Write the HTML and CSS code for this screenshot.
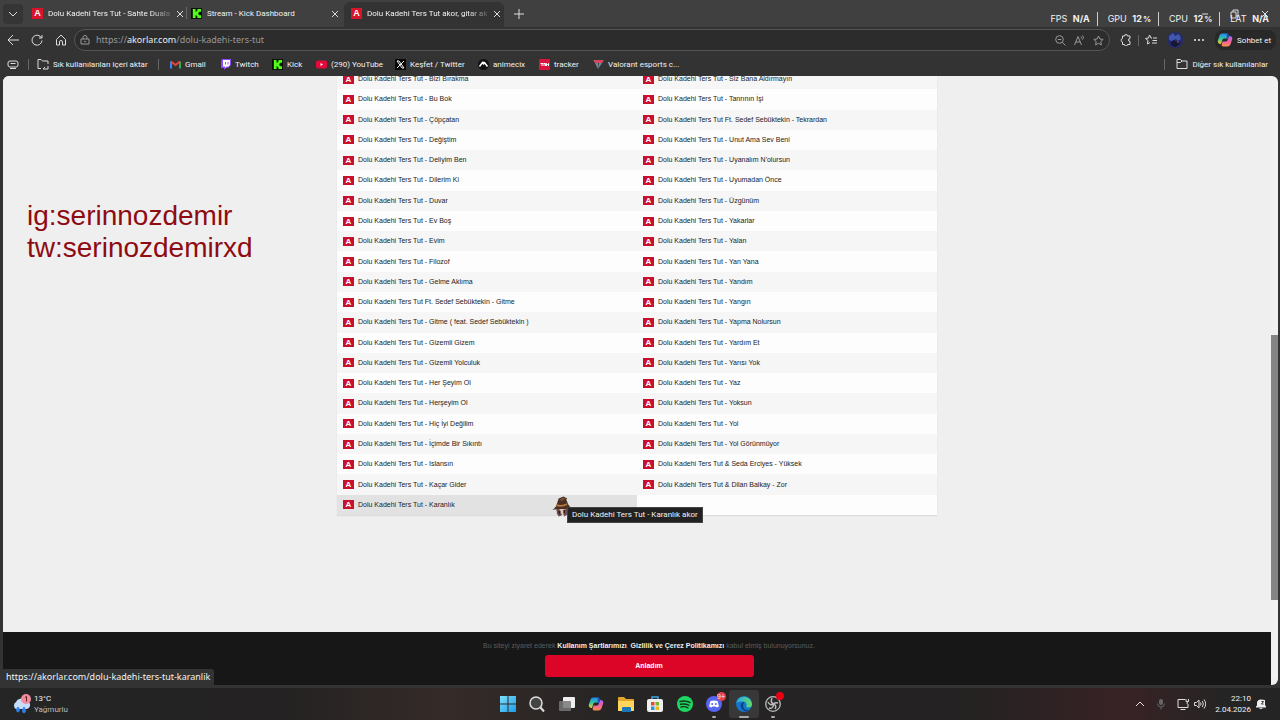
FILE: index.html
```html
<!DOCTYPE html>
<html lang="tr">
<head>
<meta charset="utf-8">
<title>Dolu Kadehi Ters Tut akor, gitar akorları</title>
<link rel="stylesheet" href="styles.css">
</head>
<body>
<svg class="defs" aria-hidden="true">
  <defs>
    <linearGradient id="blue" x1="0" y1="0" x2="1" y2="1"><stop offset="0" stop-color="#7fe0fa"/><stop offset="1" stop-color="#1c9be8"/></linearGradient>
    <linearGradient id="cpA" x1="0" y1="0" x2="0" y2="1"><stop offset="0" stop-color="#1f8df0"/><stop offset=".5" stop-color="#35c3a0"/><stop offset="1" stop-color="#f5d21c"/></linearGradient>
    <linearGradient id="cpB" x1="0" y1="0" x2="0" y2="1"><stop offset="0" stop-color="#a66bf5"/><stop offset=".5" stop-color="#ee5fa5"/><stop offset="1" stop-color="#fb8f4a"/></linearGradient>
    <linearGradient id="edgeA" x1="0" y1="0" x2="1" y2="0"><stop offset="0" stop-color="#2aa9e8"/><stop offset="1" stop-color="#62dc6a"/></linearGradient>
    <symbol id="copilot" viewBox="0 0 20 20">
      <path d="M7 2h5c2 0 2.500 1 2 3l-1 3H9c-1.500 0-2 1-2.500 2.500L5 15c-3 0-4.500-1.500-4-4l2-6c.8-2 2-3 4-3z" fill="url(#cpA)"/>
      <path d="M13 18H8c-2 0-2.500-1-2-3l1-3h4c1.500 0 2-1 2.500-2.500L15 5c3 0 4.500 1.500 4 4l-2 6c-.8 2-2 3-4 3z" fill="url(#cpB)"/>
      <path d="M12 2c1.700 0 2.300 1 2.800 3l-1.300 4-1.500-1z" fill="#2450c8"/>
    </symbol>
    <symbol id="close" viewBox="0 0 10 10"><path d="M2 2l6 6M8 2L2 8" stroke="#ddd" fill="none"/></symbol>
    <symbol id="kick" viewBox="0 0 12 12"><path d="M0 0h12v12H0z" fill="#071204"/><path d="M2 1h3v3h1V3h1V1h4v3H9v1H8v2h1v1h2v3H7V9H6V8H5v3H2z" fill="#53fc18"/></symbol>
  </defs>
</svg>

<div class="desktop">
  <div class="browser">
    <header class="tabs">
      <button class="tab-menu" aria-label="Sekmeler"><svg class="i10" viewBox="0 0 10 10"><path d="M1 3l4 4 4-4" class="line"/></svg></button>
      <div class="tab tab-first"><span class="a-icon">A</span><span class="tab-title fade">Dolu Kadehi Ters Tut - Sahte Duala</span><button aria-label="Kapat"><svg class="i10"><use href="#close"/></svg></button></div>
      <div class="tab tab-kick"><svg class="i11"><use href="#kick"/></svg><span class="tab-title">Stream - Kick Dashboard</span><button aria-label="Kapat"><svg class="i10"><use href="#close"/></svg></button></div>
      <div class="tab tab-active"><span class="a-icon">A</span><span class="tab-title fade">Dolu Kadehi Ters Tut akor, gitar ak</span><button aria-label="Kapat"><svg class="i10"><use href="#close"/></svg></button></div>
      <button class="new-tab" aria-label="Yeni sekme"><svg class="i10" viewBox="0 0 10 10"><path d="M5 0v10M0 5h10" class="line"/></svg></button>
      <div class="window-buttons">
        <button aria-label="Küçült"><svg class="i10" viewBox="0 0 10 10"><path d="M2 5h6" class="line"/></svg></button>
        <button aria-label="Geri yükle"><svg class="i10" viewBox="0 0 10 10"><path d="M1 3h5v6H1zM3 3V1h5v6H6" class="line"/></svg></button>
        <button aria-label="Kapat"><svg class="i10"><use href="#close"/></svg></button>
      </div>
      <div class="stats">
        <span>FPS <b>N/A</b></span><span>GPU <b>12<small>%</small></b></span><span>CPU <b>12<small>%</small></b></span><span>LAT <b>N/A</b></span>
      </div>
    </header>

    <nav class="toolbar">
      <button class="nav-button" aria-label="Geri"><svg class="i12" viewBox="0 0 12 12"><path d="M6 1L1 6l5 5M1 6h11" class="line"/></svg></button>
      <button class="nav-button" aria-label="Yenile"><svg class="i12" viewBox="0 0 12 12"><path d="M10.500 4A5 5 0 1 0 11 6.500M11 1v3H8" class="line"/></svg></button>
      <button aria-label="Ana sayfa"><svg class="i12" viewBox="0 0 12 12"><path d="M1.500 5.500L6 1l4.500 4.500V11H7.500V8a1.500 1.500 0 0 0-3 0v3h-3z" class="line"/></svg></button>
      <div class="address">
        <svg class="i10" viewBox="0 0 10 10"><path d="M1 4h8v5H1zM3 4V2.500a2 2 0 0 1 4 0V4" class="line dim"/><circle cx="5" cy="6.500" r=".8" fill="#aaa"/></svg>
        <a class="url" href="#liste">https://<b>akorlar.com</b>/dolu-kadehi-ters-tut</a>
        <svg class="i11" viewBox="0 0 11 11"><circle cx="4.500" cy="4.500" r="3.800" class="line dim"/><path d="M7.300 7.300L10.500 10.500M2.800 4.500h3.500" class="line dim"/></svg>
        <svg class="i11" viewBox="0 0 11 11"><path d="M.5 10L4 1.500 7.500 10M1.800 7h4.500M7 1.500q1 1 0 2M8.500.5q2 2 0 4" class="line dim"/></svg>
        <svg class="i11" viewBox="0 0 11 11"><path d="M5.500 1l1.400 3 3.300.4-2.400 2.200.6 3.300-2.900-1.600-2.900 1.600.6-3.300L.8 4.400 4.100 4z" class="line dim"/></svg>
      </div>
      <button aria-label="Uzantılar"><svg class="i12" viewBox="0 0 12 12"><path d="M2.500 2h2a1.500 1.500 0 0 1 3 0h2.500v2.500a1.300 1.300 0 0 0 0 3V10.500H7.500a1.500 1.500 0 0 1-3 0h-2V8a1.800 1.800 0 0 1 0-3.500z" class="line"/></svg></button>
      <span class="rule"></span>
      <button aria-label="Sık kullanılanlar"><svg class="i12" viewBox="0 0 12 12"><path d="M7 4H6L4.500 1 3.500 4l-3 .5L3 6.500 2.300 10 5 8.500M8 4h4M7.500 6.500H12M7 9h5" class="line"/></svg></button>
      <button aria-label="Profil"><svg class="i16" viewBox="0 0 16 16"><circle cx="8" cy="8" r="8" fill="#252b69"/><path d="M2 4l4-3 2 3 4-2 2 5-3 2-2-2-4 2-3-1z" fill="#4156ae"/><path d="M4 10l3-2 2 2 3-1 1 3-5 3-4-2z" fill="#151737"/><circle cx="11" cy="10" r="1" fill="#9a3760"/></svg></button>
      <button aria-label="Diğer"><svg class="i12" viewBox="0 0 12 12"><g fill="#eee"><circle cx="2" cy="6" r="1"/><circle cx="6" cy="6" r="1"/><circle cx="10" cy="6" r="1"/></g></svg></button>
      <button class="chat"><svg class="i16"><use href="#copilot"/></svg>Sohbet et</button>
    </nav>

    <nav class="bookmarks">
      <svg class="i12" viewBox="0 0 12 12"><rect x="1" y="3" width="10" height="6" rx="2" class="line"/><path d="M3.500 5.500h5M3 10.500h6" class="line"/></svg>
      <span class="rule"></span>
      <a href="#liste"><svg class="i12" viewBox="0 0 12 12"><path d="M4 10.500H1V1.500h3l1.500 1.500H11v3M11 8v3H6M8 9l-2 2" class="line"/></svg>Sık kullanılanları içeri aktar</a>
      <span class="rule"></span>
      <a href="#liste"><svg class="i11" viewBox="0 0 11 11"><path d="M1 9.500V2.500" stroke="#4285f4" stroke-width="2"/><path d="M10 9.500V2.500" stroke="#34a853" stroke-width="2"/><path d="M1 2.500l4.500 3.500L10 2.500" stroke="#ea4335" stroke-width="2" fill="none"/></svg>Gmail</a>
      <a href="#liste"><svg class="i11" viewBox="0 0 11 11"><path d="M2 0h9v6L8 9H6l-2 2V9H1V2z" fill="#9146ff"/><path d="M3 1h7v5L8.500 7.500h-2L5 9V7.500H3z" fill="#fff"/><path d="M5.500 3v2.500M8 3v2.500" stroke="#9146ff"/></svg>Twitch</a>
      <a href="#liste"><svg class="i11"><use href="#kick"/></svg>Kick</a>
      <a href="#liste"><svg class="i11" viewBox="0 0 11 11"><rect y="1.500" width="11" height="8" rx="2" fill="#e5093a"/><path d="M4.500 4v3L7 5.500z" fill="#fff"/></svg>(290) YouTube</a>
      <a href="#liste"><svg class="i11" viewBox="0 0 11 11"><path d="M0 0h11v11H0z" fill="#080808"/><path d="M2 2h2l5 7H7zM9 2L2 9" stroke="#eee" fill="none"/></svg>Keşfet / Twitter</a>
      <a href="#liste"><svg class="i11" viewBox="0 0 11 11"><circle cx="5.500" cy="5.500" r="5.500" fill="#111"/><path d="M1.500 7.500L4.500 3.500 6 5.500M5 3.500h1.500l3 4" stroke="#fff" stroke-width="1.500" fill="none"/></svg>animecix</a>
      <a href="#liste"><svg class="i11" viewBox="0 0 11 11"><rect width="11" height="11" rx="1" fill="#d9143f"/><path d="M1.500 4.500h3M3 4.500v2.500M5 7V4.500h1.500V7M7.500 7V4.500l1 1 1-1V7" stroke="#fff" fill="none"/></svg>tracker</a>
      <a href="#liste"><svg class="i11" viewBox="0 0 11 11"><path d="M0 1h11L9 4H2z" fill="#d6475b"/><path d="M2 4h3v6zM9 4H6L5 10z" fill="#708ba0"/></svg>Valorant esports c...</a>
      <span class="rule"></span>
      <a href="#liste"><svg class="i12" viewBox="0 0 12 12"><path d="M1 10.500V1.500h3.500L6 3h5v7.500zM1 4.500h3.500L6 3" class="line"/></svg>Diğer sık kullanılanlar</a>
    </nav>

    <div class="viewport">
      <div class="page">
        <main>
          <ul class="songs" id="liste">
            <li><a href="#"><i>A</i>Dolu Kadehi Ters Tut - Bizi Bırakma</a></li>
            <li><a href="#"><i>A</i>Dolu Kadehi Ters Tut - Bu Bok</a></li>
            <li><a href="#"><i>A</i>Dolu Kadehi Ters Tut - Çöpçatan</a></li>
            <li><a href="#"><i>A</i>Dolu Kadehi Ters Tut - Değiştim</a></li>
            <li><a href="#"><i>A</i>Dolu Kadehi Ters Tut - Deliyim Ben</a></li>
            <li><a href="#"><i>A</i>Dolu Kadehi Ters Tut - Dilerim Ki</a></li>
            <li><a href="#"><i>A</i>Dolu Kadehi Ters Tut - Duvar</a></li>
            <li><a href="#"><i>A</i>Dolu Kadehi Ters Tut - Ev Boş</a></li>
            <li><a href="#"><i>A</i>Dolu Kadehi Ters Tut - Evim</a></li>
            <li><a href="#"><i>A</i>Dolu Kadehi Ters Tut - Filozof</a></li>
            <li><a href="#"><i>A</i>Dolu Kadehi Ters Tut - Gelme Aklıma</a></li>
            <li><a href="#"><i>A</i>Dolu Kadehi Ters Tut Ft. Sedef Sebüktekin - Gitme</a></li>
            <li><a href="#"><i>A</i>Dolu Kadehi Ters Tut - Gitme ( feat. Sedef Sebüktekin )</a></li>
            <li><a href="#"><i>A</i>Dolu Kadehi Ters Tut - Gizemli Gizem</a></li>
            <li><a href="#"><i>A</i>Dolu Kadehi Ters Tut - Gizemli Yolculuk</a></li>
            <li><a href="#"><i>A</i>Dolu Kadehi Ters Tut - Her Şeyim Ol</a></li>
            <li><a href="#"><i>A</i>Dolu Kadehi Ters Tut - Herşeyim Ol</a></li>
            <li><a href="#"><i>A</i>Dolu Kadehi Ters Tut - Hiç İyi Değilim</a></li>
            <li><a href="#"><i>A</i>Dolu Kadehi Ters Tut - İçimde Bir Sıkıntı</a></li>
            <li><a href="#"><i>A</i>Dolu Kadehi Ters Tut - Islansın</a></li>
            <li><a href="#"><i>A</i>Dolu Kadehi Ters Tut - Kaçar Gider</a></li>
            <li class="hovered"><a href="#"><i>A</i>Dolu Kadehi Ters Tut - Karanlık</a></li>
            <li><a href="#"><i>A</i>Dolu Kadehi Ters Tut - Siz Bana Aldırmayın</a></li>
            <li><a href="#"><i>A</i>Dolu Kadehi Ters Tut - Tanrının İşi</a></li>
            <li><a href="#"><i>A</i>Dolu Kadehi Ters Tut Ft. Sedef Sebüktekin - Tekrardan</a></li>
            <li><a href="#"><i>A</i>Dolu Kadehi Ters Tut - Unut Ama Sev Beni</a></li>
            <li><a href="#"><i>A</i>Dolu Kadehi Ters Tut - Uyanalım N'olursun</a></li>
            <li><a href="#"><i>A</i>Dolu Kadehi Ters Tut - Uyumadan Önce</a></li>
            <li><a href="#"><i>A</i>Dolu Kadehi Ters Tut - Üzgünüm</a></li>
            <li><a href="#"><i>A</i>Dolu Kadehi Ters Tut - Yakarlar</a></li>
            <li><a href="#"><i>A</i>Dolu Kadehi Ters Tut - Yalan</a></li>
            <li><a href="#"><i>A</i>Dolu Kadehi Ters Tut - Yan Yana</a></li>
            <li><a href="#"><i>A</i>Dolu Kadehi Ters Tut - Yandım</a></li>
            <li><a href="#"><i>A</i>Dolu Kadehi Ters Tut - Yangın</a></li>
            <li><a href="#"><i>A</i>Dolu Kadehi Ters Tut - Yapma Nolursun</a></li>
            <li><a href="#"><i>A</i>Dolu Kadehi Ters Tut - Yardım Et</a></li>
            <li><a href="#"><i>A</i>Dolu Kadehi Ters Tut - Yarısı Yok</a></li>
            <li><a href="#"><i>A</i>Dolu Kadehi Ters Tut - Yaz</a></li>
            <li><a href="#"><i>A</i>Dolu Kadehi Ters Tut - Yoksun</a></li>
            <li><a href="#"><i>A</i>Dolu Kadehi Ters Tut - Yol</a></li>
            <li><a href="#"><i>A</i>Dolu Kadehi Ters Tut - Yol Görünmüyor</a></li>
            <li><a href="#"><i>A</i>Dolu Kadehi Ters Tut &amp; Seda Erciyes - Yüksek</a></li>
            <li><a href="#"><i>A</i>Dolu Kadehi Ters Tut &amp; Dilan Balkay - Zor</a></li>
          </ul>
        </main>
        <div class="consent">
          <p>Bu siteyi ziyaret ederek <a href="#">Kullanım Şartlarımızı</a>, <a href="#">Gizlilik ve Çerez Politikamızı</a> kabul etmiş bulunuyorsunuz.</p>
          <button>Anladım</button>
        </div>
      </div>
      <div class="scrollbar"><div class="thumb"></div></div>
      <p class="watermark">ig:serinnozdemir<br>tw:serinozdemirxd</p>
      <svg class="cursor" viewBox="0 0 20 22"><path d="M5 12q-1 6 2 9l3-1 1-3 2 4 3-2 1-7z" fill="#6d4c4b"/><path d="M8 13h6v5l-3 1-3-2z" fill="#e3c3b4"/><path d="M0 14q4-2 5-6L7 2l5-2 4 2-1 1 2 5 3 4-7 1-6 0z" fill="#4a3024"/><path d="M5 8q5 2 11-1v2q-5 3-12 1z" fill="#b37c3e"/><path d="M8 3l4-2 2 1-4 3z" fill="#7b5035"/><path d="M8 15v3M13 14v4" stroke="#27191c" stroke-width="2"/></svg>
      <div class="tooltip" role="tooltip">Dolu Kadehi Ters Tut - Karanlık akor</div>
      <div class="status">https://akorlar.com/dolu-kadehi-ters-tut-karanlik</div>
    </div>
  </div>

  <footer class="taskbar">
    <div class="weather">
      <svg class="i20" viewBox="0 0 20 20"><path d="M4 15a4 4 0 0 1 0-7 5 5 0 0 1 9-1 4 4 0 0 1 2 8z" fill="#c5dcfb"/><path d="M6 13q-3 4 0 5 3-1 0-5zM12 13q-3 5 0 6 3-1 0-6z" fill="#2d80e8" stroke="#2d80e8"/><circle cx="14" cy="5" r="5" fill="#f38a9c"/><path d="M13 3.500l1.500-1V7.500" stroke="#5e2530" fill="none"/></svg>
      <div>13°C<br><span>Yağmurlu</span></div>
    </div>
    <div class="apps">
      <button aria-label="Başlat"><svg class="i18" viewBox="0 0 18 18"><path d="M1 1h7.500v7.500H1zM9.500 1H17v7.500H9.500zM1 9.500h7.500V17H1zM9.500 9.500H17V17H9.500z" fill="url(#blue)"/></svg></button>
      <button aria-label="Ara"><svg class="i18" viewBox="0 0 18 18"><circle cx="8" cy="8" r="6" fill="#444" stroke="#ddd" stroke-width="1.500"/><path d="M12.500 12.500L16 16.500" stroke="#ddd" stroke-width="2"/></svg></button>
      <button aria-label="Görev görünümü"><svg class="i18" viewBox="0 0 18 18"><rect x="5" y="2" width="12" height="11" rx="1" fill="#eee"/><rect x="1" y="6" width="12" height="10" rx="1" fill="#777" opacity=".85"/></svg></button>
      <button aria-label="Copilot"><svg class="i16"><use href="#copilot"/></svg></button>
      <button aria-label="Dosya Gezgini"><svg class="i18" viewBox="0 0 18 18"><path d="M1 3q0-1 1-1h5l2 2h7q1 0 1 1v11H1z" fill="#e0a52a"/><path d="M1 6h16v10H1z" fill="#fbd65a"/><path d="M5 17v-4q0-1 1-1h7q1 0 1 1v4z" fill="#1976b9"/></svg></button>
      <button aria-label="Store"><svg class="i18" viewBox="0 0 18 18"><path d="M6 4V2h6v2" stroke="#3ca6df" stroke-width="1.500" fill="none"/><rect x="1" y="4" width="16" height="13" rx="2" fill="#eee"/><path d="M5 7h3.500v3.500H5z" fill="#e64b32"/><path d="M9.500 7H13v3.500H9.500z" fill="#73b52b"/><path d="M5 11.500h3.500V15H5z" fill="#2397da"/><path d="M9.500 11.500H13V15H9.500z" fill="#f3b51c"/></svg></button>
      <button aria-label="Spotify"><svg class="i18" viewBox="0 0 18 18"><circle cx="9" cy="9" r="8" fill="#1ed760"/><path d="M4 6.500q5-1.500 10 1M4.500 9.300q4.500-1 8.500 1M5 12q4-1 7 .8" stroke="#15351f" stroke-width="1.400" fill="none" stroke-linecap="round"/></svg></button>
      <button class="running" aria-label="Discord"><svg class="i18" viewBox="0 0 18 18"><circle cx="9" cy="9" r="8" fill="#5865f2"/><path d="M5.500 6q3.500-1 7 0l1.500 5.500-2.500 1-1-1h-3l-1 1L4 11.500z" fill="#fff"/><circle cx="7.200" cy="9" r="1" fill="#5865f2"/><circle cx="10.800" cy="9" r="1" fill="#5865f2"/></svg><span class="badge">9+</span></button>
      <button class="running current" aria-label="Edge"><svg class="i18" viewBox="0 0 18 18"><circle cx="9" cy="9" r="8" fill="#1476c8"/><path d="M1.200 8A8 8 0 0 1 17 9q0 3.500-3.500 3.500-3 0-2-2Q12 7 8 6.500 3 6 1.200 8z" fill="url(#edgeA)"/><path d="M8 7q-4 3-1 7 3 3.500 7 1.500-5 0-6-4-.3-3 1.500-4z" fill="#123f84"/></svg></button>
      <button class="running" aria-label="OBS"><svg class="i18" viewBox="0 0 18 18"><circle cx="9" cy="9" r="7.300" fill="#272727" stroke="#bbb" stroke-width="1.300"/><path d="M8 3q-2 4 1.500 6M14 8q-4-1-4.500 2M5 13q4 1 4.500-3M4 7q2 4 5.500 2M11 14q2-3-1-5" stroke="#bbb" stroke-width="1.500" fill="none"/></svg><span class="badge rec"></span></button>
    </div>
    <div class="tray">
      <svg class="i10" viewBox="0 0 10 10"><path d="M1 7l4-4 4 4" class="line"/></svg>
      <svg class="i12 mic" viewBox="0 0 12 12"><rect x="4" y="1" width="4" height="6" rx="2" fill="#666"/><path d="M2.500 5.500q0 3.500 3.500 3.500t3.500-3.500M6 9v2.500" stroke="#666" fill="none"/></svg>
      <svg class="i12" viewBox="0 0 12 12"><path d="M8 1.500H1v8h10V6M3.500 11.500h5M9 1v2.500h2.500V1M10.200 3.500V6" class="line"/></svg>
      <svg class="i12" viewBox="0 0 12 12"><path d="M.5 4.500h2L5 2v8L2.500 7.500h-2zM6.500 4.500q1.200 1.500 0 3M8.200 3q2.400 3 0 6M10 1.500q3.500 4.500 0 9" class="line"/></svg>
      <div class="clock">22:10<br>2.04.2026</div>
      <svg class="i10" viewBox="0 0 10 10"><path d="M0 8.500V7.500l1-1V3q1-3 4-2.500l4 .5v5l1 1.500v1zM3 9h4q-2 2-4 0" fill="#eee"/><path d="M5.500 2.500h2L5.500 5h2" stroke="#333" fill="none"/></svg>
    </div>
  </footer>
</div>
</body>
</html>
```
FILE: styles.css
```css
* { box-sizing: border-box; }
body { margin: 0; font-family: Roboto, "Open Sans", sans-serif; font-size: 8px; color: #f2f2f2; background: #222; }
button { border: 0; padding: 0; margin: 0; background: none; color: inherit; font: inherit; display: flex; align-items: center; justify-content: center; }
a { color: inherit; text-decoration: none; }
p { margin: 0; }
svg { display: block; flex: none; }
.defs { position: absolute; width: 0; height: 0; }
.line { fill: none; stroke: #ddd; stroke-width: 1; }
.dim { stroke: #999; }
.i10 { width: 10px; height: 10px; }
.i11 { width: 11px; height: 11px; }
.i12 { width: 12px; height: 12px; }
.i16 { width: 16px; height: 16px; }
.i18 { width: 18px; height: 18px; }
.i20 { width: 20px; height: 20px; }
.rule { width: 1px; height: 11px; background: #666; flex: none; }

.desktop { height: 100vh; display: flex; flex-direction: column; overflow: hidden; }
.browser { flex: 1; min-height: 0; display: flex; flex-direction: column; background: #333; }

.tabs { position: relative; display: flex; height: 27px; background: #404040; align-items: stretch; white-space: nowrap; }
.tab-menu { width: 20px; height: 20px; margin: 4px 4px 0 3px; background: #353535; border-radius: 4px; }
.tab { display: flex; align-items: center; gap: 5px; padding: 0 4px; }
.tab-title { flex: 1; }
.fade { -webkit-mask-image: linear-gradient(90deg, #000 84%, #0003); mask-image: linear-gradient(90deg, #000 84%, #0003); }
.tab-first { width: 159px; padding-left: 5px; }
.tab-kick { width: 158px; position: relative; padding-left: 5px; }
.tab-kick::before { content: ""; position: absolute; left: 0; top: 7px; height: 12px; width: 1px; background: #666; }
.tab-active { width: 160px; margin-top: 2px; padding: 0 5px 2px 7px; background: #333; border-radius: 6px 6px 0 0; }
.a-icon { width: 11px; height: 11px; background: #d8142c; color: #fff; font: bold 9px/11px "Liberation Sans", sans-serif; text-align: center; flex: none; }
.new-tab { width: 30px; }
.window-buttons { display: flex; margin-left: auto; padding-right: 10px; gap: 20px; }
.stats { position: absolute; right: 11px; top: 12px; display: flex; font: 9px/13px Inter, Roboto, sans-serif; }
.stats span + span { border-left: 1px solid #ccc; margin-left: 7px; padding-left: 10px; }
.stats b { margin-left: 3px; }
.stats small { font-size: 8px; margin-left: 1px; }

.toolbar { display: flex; align-items: center; height: 26px; padding: 0 4px 0 7px; gap: 10px; }
.nav-button { margin-right: 2px; }
.toolbar .rule { margin: 0 -4px; }
.address { flex: 1; display: flex; align-items: center; gap: 8px; height: 22px; margin-left: -3px; padding: 0 5px; background: #2c2c2c; border: 1px solid #555; border-radius: 11px; }
.url { flex: 1; color: #999; font: 9px/12px "Noto Sans", "Open Sans", sans-serif; margin-left: -2px; }
.url b { color: #eee; font-weight: 400; }
.chat { gap: 4px; height: 20px; padding: 0 5px 0 2px; background: #282828; border-radius: 8px; white-space: nowrap; }

.bookmarks { display: grid; grid-template-columns: 21px 9px 121px 12px 50px 52px 44px 79px 83px 61px 54px 1fr 12px auto; align-items: center; height: 22px; padding: 0 12px 0 7px; margin-bottom: 1px; white-space: nowrap; }
.bookmarks a { display: flex; align-items: center; gap: 4px; }

.viewport { position: relative; flex: 1; min-height: 0; display: flex; margin: 0 2px 3px 3px; background: #f0f0f0; border-radius: 6px 6px 6px 0; overflow: hidden; }
.page { flex: 1; min-width: 0; display: flex; flex-direction: column; background: #efefef; }
main { flex: 1; min-height: 0; }
.songs { list-style: none; width: 600px; height: 446px; margin: -7px auto 0; padding: 0; display: grid; grid-template: repeat(22, 1fr) / 1fr 1fr; grid-auto-flow: column; background: #fdfdfd; box-shadow: 0 1px 1px #ddd; font: 7px/10px "Liberation Sans", sans-serif; color: #222; }
.songs li:nth-child(odd) { background: #f6f6f6; }
.songs .hovered { background: #e2e2e2; }
.songs a { height: 100%; display: flex; align-items: center; gap: 4px; padding-left: 6px; }
.songs i { width: 11px; height: 9px; background: #c8102e; color: #fff; font: bold 8px/9px "Liberation Sans", sans-serif; text-align: center; }
.consent { display: flex; flex-direction: column; align-items: center; gap: 4px; padding: 9px 0 8px 24px; background: #171717; color: #5c5c5c; font: 7px/10px "Liberation Sans", sans-serif; }
.consent a { color: #eee; font-weight: bold; }
.consent button { width: 209px; height: 22px; background: #dc0528; border-radius: 3px; color: #fff; font-weight: bold; }
.scrollbar { width: 7px; padding-top: 259px; }
.thumb { height: 265px; background: #858585; }

.watermark { position: absolute; left: 24px; top: 124px; color: #8e0b12; font: 28px/32px "Liberation Sans", sans-serif; }
.cursor { position: absolute; left: 549px; top: 420px; width: 19px; height: 22px; }
.tooltip { position: absolute; left: 564px; top: 431px; height: 16px; padding: 0 4px; background: #222; border: 1px solid #444; line-height: 14px; white-space: nowrap; }
.status { position: absolute; left: 0; bottom: 0; height: 16px; padding: 0 4px 0 3px; background: #333; border-radius: 0 3px 0 0; font: 9px/16px "Noto Sans", "Open Sans", sans-serif; }

.taskbar { position: relative; display: flex; justify-content: space-between; align-items: center; height: 32px; padding: 0 14px 0 12px; background: linear-gradient(90deg, #252525, #242222 22%, #352b29 35%, #262424 48%, #242222 75%, #382225 88%, #242424 96%); }
.weather { display: flex; align-items: center; gap: 2px; line-height: 11px; }
.weather span { color: #bbb; }
.apps { position: absolute; left: 50%; margin-left: -147px; display: grid; grid-template-columns: repeat(10, 1fr); width: 295px; }
.apps button { position: relative; height: 28px; }
.apps .current { background: #383838; border-radius: 3px; }
.running::after { content: ""; position: absolute; bottom: 0; width: 4px; height: 2px; border-radius: 1px; background: #aaa; }
.current::after { width: 10px; }
.badge { position: absolute; left: 17px; top: 2px; width: 9px; height: 9px; border-radius: 5px; background: #e5404a; font: 7px/9px "Liberation Sans", sans-serif; }
.rec { width: 8px; height: 8px; background: #e80010; }
.tray { display: flex; align-items: center; gap: 5px; }
.tray .mic { margin: 0 5px; }
.clock { line-height: 11px; text-align: right; margin-left: 4px; }
```
